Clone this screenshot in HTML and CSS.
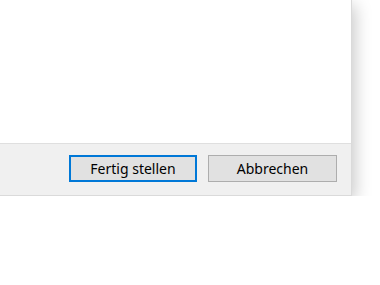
FILE: index.html
```html
<!DOCTYPE html>
<html lang="de">
<head>
    <meta charset="UTF-8">
    <title>Assistent</title>
    <link rel="stylesheet" href="styles.css">
</head>
<body>
    <div class="window">
        <div class="content"></div>
        <div class="footer">
            <button class="btn btn-default">Fertig stellen</button>
            <button class="btn">Abbrechen</button>
        </div>
    </div>
</body>
</html>
```

FILE: styles.css
```css
body {
    margin: 0;
    background-color: #fff;
    font-family: 'Noto Sans', 'Open Sans', sans-serif;
}

.window {
    width: 351px;
    border-right: 1px solid #dadada;
    border-bottom: 1px solid #dadada;
    box-shadow: 3px 5px 16px rgba(0, 0, 0, 0.22);
}

.content {
    height: 143px;
    background-color: #fff;
}

.footer {
    height: 52px;
    border-top: 1px solid #dfdfdf;
    background-color: #f0f0f0;
    display: flex;
    justify-content: flex-end;
    align-items: flex-start;
    gap: 11px;
    padding: 11px 14px 0 0;
    box-sizing: border-box;
}

.btn {
    width: 129px;
    height: 27px;
    margin: 0;
    padding: 0;
    font-family: inherit;
    font-size: 14px;
    color: #000;
    background-color: #e1e1e1;
    border: 1px solid #adadad;
    border-radius: 0;
}

.btn-default {
    width: 128px;
    border: 2px solid #0078d7;
}
```
